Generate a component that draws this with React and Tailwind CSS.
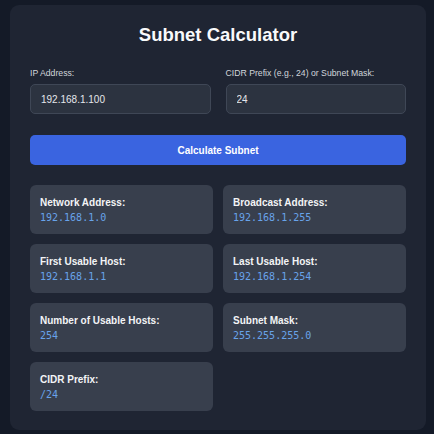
import React from 'react';

const results = [
    { label: 'Network Address:', value: '192.168.1.0' },
    { label: 'Broadcast Address:', value: '192.168.1.255' },
    { label: 'First Usable Host:', value: '192.168.1.1' },
    { label: 'Last Usable Host:', value: '192.168.1.254' },
    { label: 'Number of Usable Hosts:', value: '254' },
    { label: 'Subnet Mask:', value: '255.255.255.0' },
    { label: 'CIDR Prefix:', value: '/24' },
];

const Field = ({ label, value }) => (
    <div className="flex flex-col">
        <label className="text-[8.7px] leading-[12px] text-[#d1d5db] mb-[5px]">{label}</label>
        <input
            readOnly
            value={value}
            className="h-[30px] w-full rounded-[5px] border border-[#3f4756] bg-[#2c3340] px-[10px] text-[10px] text-[#e5e7eb] outline-none"
        />
    </div>
);

const ResultCard = ({ label, value }) => (
    <div className="h-[49px] rounded-[6px] bg-[#383f4d] px-[10px] flex flex-col justify-center gap-[2px]">
        <div className="text-[10px] leading-[13px] font-bold text-[#f3f4f6]">{label}</div>
        <div className="text-[10px] leading-[13px] text-[#68a3ea] font-['DejaVu_Sans_Mono',monospace]">{value}</div>
    </div>
);

export default function App() {
    return (
        <div className="h-[434px] w-[434px] bg-[#141a27] pt-[5px] pl-[10px] font-['Liberation_Sans',Arial,sans-serif]">
            <div className="w-[416px] h-[425px] rounded-[9px] bg-[#1f2533] px-[20px] pt-[19px]">
                <h1 className="text-center text-[18.5px] leading-[22px] font-bold text-[#f9fafb]">
                    Subnet Calculator
                </h1>

                <div className="mt-[21px] grid grid-cols-2 gap-[15px]">
                    <Field label="IP Address:" value="192.168.1.100" />
                    <Field label="CIDR Prefix (e.g., 24) or Subnet Mask:" value="24" />
                </div>

                <button className="mt-[21px] h-[30px] w-full rounded-[5px] bg-[#3a64e0] text-[10px] font-bold text-white">
                    Calculate Subnet
                </button>

                <div className="mt-[20px] grid grid-cols-2 gap-[10px]">
                    {results.map((r) => (
                        <ResultCard key={r.label} label={r.label} value={r.value} />
                    ))}
                </div>
            </div>
        </div>
    );
}
